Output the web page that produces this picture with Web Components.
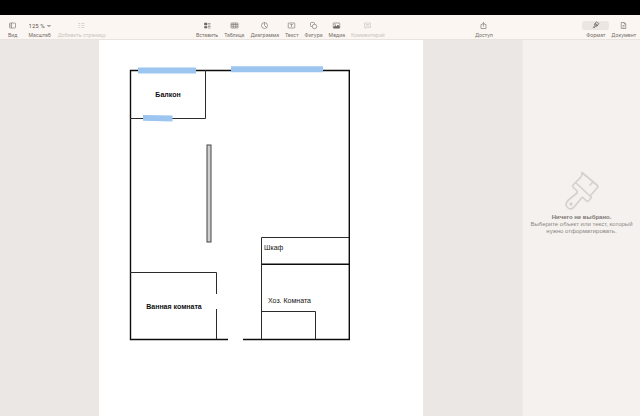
<!DOCTYPE html>
<html lang="ru">
<head>
<meta charset="utf-8">
<title>План квартиры</title>
<style>
html, body { height: 100%; margin: 0; }
body { font-family: Inter, "Liberation Sans", sans-serif; background: #ebe7e5; overflow: hidden; }
</style>
</head>
<body>
<editor-app></editor-app>
<script>
const icons = {
  view: '<rect x="1" y="2" width="12" height="10" rx="1.5"/><path d="M5 2v10M2.5 4.5h1M2.5 6.5h1M2.5 8.5h1"/>',
  add: '<path d="M1 3h3M1 7h3M1 11h3M6 3h7M6 7h7M6 11h7M2.5 2v2"/>',
  insert: '<path d="M1 2h5v4H1zM1 9h5v3H1z" fill="currentColor"/><path d="M8 3h5M8 6h5M8 9h5M8 12h5"/>',
  table: '<rect x="0" y="2" width="14" height="10" rx="1"/><path d="M0 5h14M0 8.500h14M4.500 2v10M9.500 2v10"/>',
  chart: '<circle cx="7" cy="7" r="6"/><path d="M7 1v6l4 4"/>',
  text: '<rect x="0.500" y="2" width="13" height="10" rx="1"/><path d="M4.500 5h5M7 5v5"/>',
  shape: '<rect x="1" y="1" width="8" height="8" rx="2"/><circle cx="9" cy="9" r="4.500" fill="#fbf6f1"/>',
  media: '<rect x="0.500" y="2" width="13" height="10" rx="1"/><path d="M1 11l3.500-4 2.500 2 3-3 3 4v2H1z" fill="currentColor"/><circle cx="4" cy="4.500" r=".5"/>',
  comment: '<path d="M1 2h12v9H6l-3 2v-2H1zM3.500 5h7M3.500 8h7"/>',
  share: '<path d="M5 5H2v8h10V5H9M7 9V1M4.500 3.500L7 1l2.500 2.500"/>',
  document: '<path d="M2.500 1h6l3 3v9h-9zM8.500 1v3h3M5 7h4M5 10h4"/>',
  format: '<g transform="rotate(38 7 7)"><path d="M4 0h6v6H4zM4 4h6M4 6l2 2v4a1 1 0 0 0 2 0V8l2-2"/></g>'
};

class ToolButton extends HTMLElement {
  connectedCallback() {
    this.attachShadow({ mode: 'open' }).innerHTML = `
    <style>
      :host { display: block; flex: none; color: #6f6a67; }
      :host([disabled]) { color: #c9c3be; }
      button { all: unset; box-sizing: border-box; display: flex; flex-direction: column; align-items: center; gap: 2px; font-size: 5px; line-height: 6px; white-space: nowrap; }
      .icon { display: flex; align-items: center; justify-content: center; height: 9px; min-width: 9px; border-radius: 3px; }
      :host([selected]) .icon { width: 27px; margin: 0 -4px; background: #ebe6e1; color: #4c4845; }
      svg { width: 7px; height: 7px; fill: none; stroke: currentColor; stroke-width: 1.2; overflow: visible; }
    </style>
    <button type="button" ${this.hasAttribute('disabled') ? 'disabled' : ''}>
      <span class="icon" aria-hidden="true"><svg viewBox="0 0 14 14">${icons[this.getAttribute('icon')]}</svg></span>
      <span><slot></slot></span>
    </button>`;
  }
}

class ZoomControl extends HTMLElement {
  connectedCallback() {
    this.attachShadow({ mode: 'open' }).innerHTML = `
    <style>
      :host { display: flex; flex-direction: column; align-items: center; gap: 2px; color: #6f6a67; font-size: 5px; line-height: 6px; }
      .field { display: flex; align-items: center; height: 9px; gap: 2px; color: #5b5754; }
      select { appearance: none; border: 0; margin: 0; padding: 0; background: none; color: inherit; font: 6px/9px Roboto, "Liberation Sans", sans-serif; }
      svg { width: 4px; height: 4px; fill: none; stroke: currentColor; }
    </style>
    <span class="field"><select id="zoom"><option>125 %</option></select><svg viewBox="0 0 4 4" aria-hidden="true"><path d="M.5 1L2 2.500 3.500 1"/></svg></span>
    <label for="zoom">Масштаб</label>`;
  }
}

class ToolBar extends HTMLElement {
  connectedCallback() {
    this.attachShadow({ mode: 'open' }).innerHTML = `
    <style>
      :host { display: flex; background: #fbf6f1; border-bottom: 1px solid #e9e3df; box-sizing: border-box; height: 25px; padding-top: 6px; }
      .main { flex: 1; display: grid; grid-template-columns: 16fr auto 11fr; padding: 0 8px; }
      .group { display: flex; align-items: start; }
      .left { gap: 7px; }
      .left zoom-control { margin-left: 4px; }
      .center { gap: 6px; }
      .share { justify-content: end; padding-right: 21px; }
      .side { width: 118px; box-sizing: border-box; justify-content: end; gap: 6px; padding-right: 4px; }
    </style>
    <div class="main">
      <div class="group left"><tool-button icon="view">Вид</tool-button><zoom-control></zoom-control><tool-button icon="add" disabled>Добавить страницу</tool-button></div>
      <div class="group center">
        <tool-button icon="insert">Вставить</tool-button><tool-button icon="table">Таблица</tool-button><tool-button icon="chart">Диаграмма</tool-button><tool-button icon="text">Текст</tool-button><tool-button icon="shape">Фигура</tool-button><tool-button icon="media">Медиа</tool-button><tool-button icon="comment" disabled>Комментарий</tool-button>
      </div>
      <div class="group share"><tool-button icon="share">Доступ</tool-button></div>
    </div>
    <div class="group side"><tool-button icon="format" selected>Формат</tool-button><tool-button icon="document">Документ</tool-button></div>`;
  }
}

class FloorPlan extends HTMLElement {
  connectedCallback() {
    this.attachShadow({ mode: 'open' }).innerHTML = `
    <style>
      :host { display: block; }
      svg { display: block; width: 100%; }
      text { font: 7px "Liberation Sans", Arial, sans-serif; fill: #111; }
      .bold { font-weight: 700; text-anchor: middle; }
      .outer { stroke: #0c0c0c; stroke-width: 1.4; }
      .inner { stroke: #2b2b2b; stroke-width: 1; }
    </style>
    <svg viewBox="0 0 324 376" role="img" aria-label="План квартиры">
      <g fill="none">
        <path class="outer" d="M129 299.500H31.500V30.500H250.300V299.500H144M162 224.300H250"/>
        <path class="inner" d="M106.500 30V78.500H31M31 232.500H117.500V254M117.500 269V299M250 197.500H162.500V299M162.500 271.500H216.500V299"/>
      </g>
      <rect x="108" y="105" width="4" height="97" fill="#cfcfcf" stroke="#444"/>
      <g fill="#9cc6ef">
        <path d="M39 27.500h58v6H39zM132 26.200h92v6h-92zM44 75l29.500.5v6L44 80.800z"/>
      </g>
      <text class="bold" x="69" y="57">Балкон</text>
      <text class="bold" x="75" y="269">Ванная комната</text>
      <text x="165" y="210">Шкаф</text>
      <text x="169" y="263">Хоз. Комната</text>
    </svg>`;
  }
}

class FormatPanel extends HTMLElement {
  connectedCallback() {
    this.attachShadow({ mode: 'open' }).innerHTML = `
    <style>
      :host { display: flex; flex-direction: column; align-items: center; justify-content: center; box-sizing: border-box; background: #f5f1ee; border-left: 1px solid #efeae7; color: #8b8683; font: 6px/7px "Liberation Sans", Arial, sans-serif; text-align: center; padding-bottom: 51px; }
      svg { width: 36px; height: 40px; fill: none; stroke: #d5d1ce; stroke-width: 1.7; stroke-linejoin: round; stroke-linecap: round; margin-bottom: 3px; }
      h2 { font-size: 6px; line-height: 7px; margin: 0; color: #7c7774; }
      p { margin: 0; }
    </style>
    <svg viewBox="0 0 36 40" aria-hidden="true">
      <path d="M18 1.500L33.500 14.500Q34.500 15.500 33.500 16.500L26 25L11.500 11.500L16.500 6.500Q18.500 4 18 1.500ZM11.500 11.500L9 14Q8 15 9 16L13 20Q14 21 13 22L4.500 29Q0 33 3.500 36.500Q7 40 11 35L17.500 27Q18.500 26 19.500 27L22.500 30Q23.500 31 24.500 30L27 27Q28 26 26 25M29 11L26 14"/>
      <circle cx="7" cy="33" r=".8"/>
    </svg>
    <h2>Ничего не выбрано.</h2>
    <p>Выберите объект или текст, который<br>нужно отформатировать.</p>`;
  }
}

class EditorApp extends HTMLElement {
  connectedCallback() {
    this.attachShadow({ mode: 'open' }).innerHTML = `
    <style>
      :host { display: flex; flex-direction: column; height: 100vh; }
      header { height: 15px; flex: none; background: #000; }
      .work { flex: 1; min-height: 0; display: flex; }
      main { flex: 1; min-width: 0; display: flex; justify-content: center; align-items: stretch; background: #ebe7e5; overflow: hidden; }
      floor-plan { width: 324px; flex: none; background: #fff; }
      format-panel { width: 118px; flex: none; }
    </style>
    <header></header>
    <tool-bar></tool-bar>
    <div class="work"><main><floor-plan></floor-plan></main><format-panel></format-panel></div>`;
  }
}

customElements.define('tool-button', ToolButton);
customElements.define('zoom-control', ZoomControl);
customElements.define('tool-bar', ToolBar);
customElements.define('floor-plan', FloorPlan);
customElements.define('format-panel', FormatPanel);
customElements.define('editor-app', EditorApp);
</script>
</body>
</html>
